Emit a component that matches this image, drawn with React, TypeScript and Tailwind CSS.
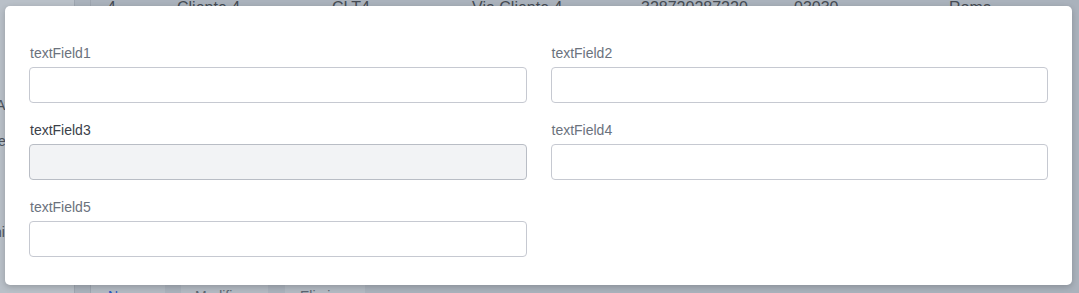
import React from "react";

const font = { fontFamily: '"Liberation Sans", Arial, sans-serif' };

function Field({ label, disabled, dark }: { label: string; disabled?: boolean; dark?: boolean }) {
  return (
    <div className="flex flex-col">
      <label className={`text-[14px] leading-[20px] pt-[1px] pl-[1px] mb-[4px] ${dark ? "text-[#3b4149]" : "text-[#6b727d]"}`}>{label}</label>
      <input
        disabled={disabled}
        className={`h-[36px] w-full rounded-[4px] border ${disabled ? "bg-[#f2f3f5] border-[#b9bdc5]" : "bg-white border-[#c6c9d1]"}`}
      />
    </div>
  );
}

export default function App() {
  return (
    <div style={font} className="relative h-[293px] w-full overflow-hidden bg-[#aab2bc]">
      <div className="flex h-full">
        <div className="w-[75px] h-full bg-[#b9c0c8] border-r border-[#9ea6b0] flex flex-col text-[14px] leading-[16px] text-[#4d535b] pt-[97px]">
          <span className="-ml-[4px]">Av</span>
          <span className="-ml-[2px] mt-[20px]">e</span>
          <span className="-ml-[6px] mt-[75px]">ni</span>
        </div>
        <div className="flex-1 flex flex-col justify-between">
          <div className="flex text-[16px] text-[#454b53] -mt-[4px] h-[24px]">
            <div className="w-[16px] border-r border-[#9ea6b0]" />
            <span className="ml-[16px] w-[70px]">4</span>
            <span className="w-[155px]">Cliente 4</span>
            <span className="w-[140px]">CLT4</span>
            <span className="w-[169px]">Via Cliente 4</span>
            <span className="w-[153px]">328720287220</span>
            <span className="w-[155px]">03030</span>
            <span>Roma</span>
          </div>
          <div className="flex h-[8px] items-start text-[14px] overflow-visible">
            <div className="w-[16px] h-full border-r border-[#9ea6b0]" />
            <div className="w-[74px] h-full bg-[#b3bac3] text-[#2a55c0] pl-[17px] pt-[2px] leading-[18px]">Nuovo</div>
            <div className="w-[16px]" />
            <div className="w-[87px] h-full bg-[#b3bac3] text-[#5c6570] pl-[14px] pt-[2px] leading-[18px]">Modifica</div>
            <div className="w-[17px]" />
            <div className="w-[80px] h-full bg-[#b3bac3] text-[#5c6570] pl-[15px] pt-[2px] leading-[18px]">Elimina</div>
          </div>
        </div>
      </div>
      <div className="absolute left-[5px] top-[6px] w-[1067px] h-[279px] bg-white rounded-[5px] shadow-[0_2px_6px_rgba(0,0,0,0.2)]">
        <div className="grid grid-cols-2 gap-x-6 gap-y-4 px-6 pt-9 pb-7">
          <Field label="textField1" />
          <Field label="textField2" />
          <Field label="textField3" disabled dark />
          <Field label="textField4" />
          <Field label="textField5" />
        </div>
      </div>
    </div>
  );
}
